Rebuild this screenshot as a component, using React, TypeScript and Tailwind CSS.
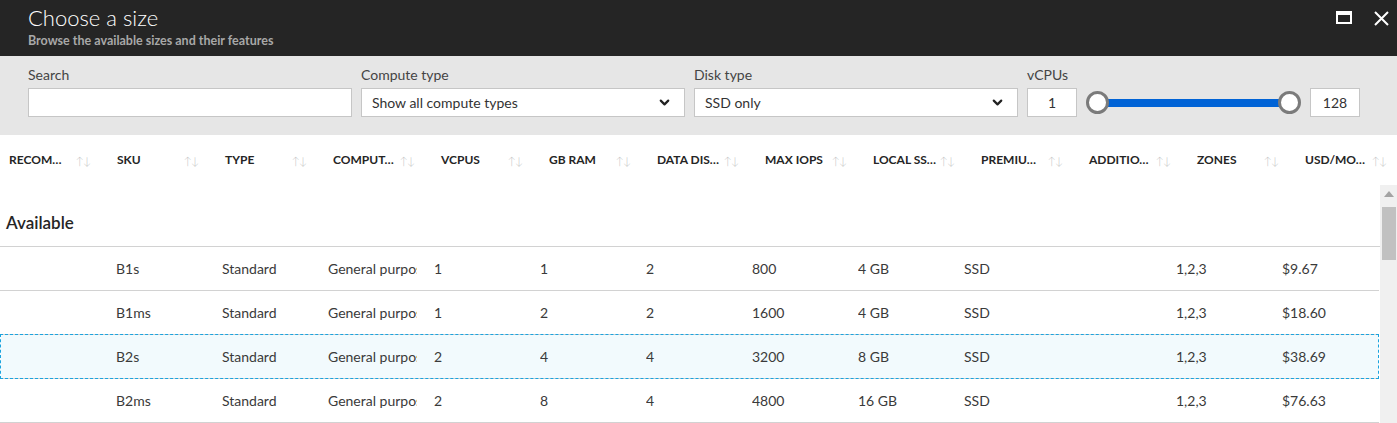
import React from 'react';
import { ChevronDown } from 'lucide-react';

const FONT = { fontFamily: '"Segoe UI", Lato, "Noto Sans", sans-serif' };

const HEADERS = ['RECOM…', 'SKU', 'TYPE', 'COMPUT…', 'VCPUS', 'GB RAM', 'DATA DIS…', 'MAX IOPS', 'LOCAL SS…', 'PREMIU…', 'ADDITIO…', 'ZONES', 'USD/MO…'];

const ROWS = [
  ['', 'B1s', 'Standard', 'General purpose', '1', '1', '2', '800', '4 GB', 'SSD', '', '1,2,3', '$9.67'],
  ['', 'B1ms', 'Standard', 'General purpose', '1', '2', '2', '1600', '4 GB', 'SSD', '', '1,2,3', '$18.60'],
  ['', 'B2s', 'Standard', 'General purpose', '2', '4', '4', '3200', '8 GB', 'SSD', '', '1,2,3', '$38.69'],
  ['', 'B2ms', 'Standard', 'General purpose', '2', '8', '4', '4800', '16 GB', 'SSD', '', '1,2,3', '$76.63'],
];

const SortIcon = () => (
  <span className="text-[11px] leading-none text-[#bcbcbc] tracking-[-1px] font-light">↑↓</span>
);

const Select: React.FC<{ value: string }> = ({ value }) => (
  <div className="w-[324px] h-[29px] bg-white border border-[#c6c6c6] flex items-center justify-between pl-[10px] pr-[12px] text-[14px] text-[#333]">
    <span>{value}</span>
    <ChevronDown size={15} strokeWidth={3.5} className="text-[#222]" />
  </div>
);

export default function App() {
  return (
    <div className="w-[1397px] h-[423px] overflow-hidden bg-white" style={FONT}>
      {/* Title bar */}
      <div className="h-[56px] bg-[#252525] flex justify-between pl-[28px] pr-[8px]">
        <div className="pt-[4px]">
          <div className="text-[22px] font-light text-white leading-[28px]">Choose a size</div>
          <div className="text-[12.5px] font-bold text-[#a8a8a8] leading-[16px] mt-[1px]">Browse the available sizes and their features</div>
        </div>
        <div className="flex items-start gap-[22px] pt-[11px]">
          <div className="w-[16px] h-[13px] border-2 border-t-[4px] border-white" />
          <svg width="15" height="15" viewBox="0 0 15 15">
            <path d="M1 1 L14 14 M14 1 L1 14" stroke="white" strokeWidth="2" />
          </svg>
        </div>
      </div>

      {/* Filters */}
      <div className="h-[79px] bg-[#e6e6e6] pl-[28px] pt-[10px] flex gap-[9px] text-[#444]">
        <div>
          <div className="text-[14px] leading-[18px] mb-[4px]">Search</div>
          <div className="w-[324px] h-[29px] bg-white border border-[#c6c6c6]" />
        </div>
        <div>
          <div className="text-[14px] leading-[18px] mb-[4px]">Compute type</div>
          <Select value="Show all compute types" />
        </div>
        <div>
          <div className="text-[14px] leading-[18px] mb-[4px]">Disk type</div>
          <Select value="SSD only" />
        </div>
        <div>
          <div className="text-[14px] leading-[18px] mb-[4px]">vCPUs</div>
          <div className="flex items-center">
            <div className="w-[50px] h-[29px] bg-white border border-[#c6c6c6] flex items-center justify-center text-[14px] text-[#333]">1</div>
            <div className="relative w-[216px] h-[29px] ml-[8px] mr-[9px] flex items-center px-[12px]">
              <div className="h-[8px] w-full bg-[#0063d6]" />
              <div className="absolute left-[1px] top-[3px] w-[23px] h-[23px] rounded-full bg-white border-[3px] border-[#7b7b7b]" />
              <div className="absolute right-[0px] top-[3px] w-[23px] h-[23px] rounded-full bg-white border-[3px] border-[#7b7b7b]" />
            </div>
            <div className="w-[50px] h-[29px] bg-white border border-[#c6c6c6] flex items-center justify-center text-[14px] text-[#333]">128</div>
          </div>
        </div>
      </div>

      {/* Column headers */}
      <div className="h-[50px] flex items-center">
        {HEADERS.map((h) => (
          <div key={h} className="w-[108px] shrink-0 flex items-center justify-between pl-[9px] pr-[18px]">
            <span className="text-[12px] font-bold text-[#252525] whitespace-nowrap">{h}</span>
            <SortIcon />
          </div>
        ))}
      </div>

      {/* Body */}
      <div className="flex">
        <div className="w-[1380px]">
          <div className="h-[62px] border-b border-[#d2d2d2] flex items-end pl-[6px] pb-[11px]">
            <span className="text-[17px] font-semibold text-[#252525]">Available</span>
          </div>
          {ROWS.map((row, i) => {
            const selected = i === 2;
            return (
              <div
                key={row[1]}
                className={`relative h-[44px] border-b border-[#d2d2d2] flex items-center w-[1379px] ${selected ? 'bg-[#f2fafd]' : ''}`}
              >
                {selected && (
                  <div className="absolute -top-px left-0 right-0 -bottom-px border border-dashed border-[#1ba3de]" />
                )}
                {row.map((cell, j) => (
                  <div key={j} className="w-[106px] shrink-0 pl-[10px]">
                    <div className="w-[89px] overflow-hidden whitespace-nowrap text-[14px] text-[#3a3a3a]">{cell}</div>
                  </div>
                ))}
              </div>
            );
          })}
        </div>
        {/* Scrollbar */}
        <div className="w-[17px] bg-[#f0f0f0] h-[240px] flex flex-col items-center pt-[6px]">
          <div className="w-0 h-0 border-l-[5px] border-r-[5px] border-b-[6px] border-l-transparent border-r-transparent border-b-[#a3a3a3]" />
          <div className="w-[14px] h-[53px] bg-[#c1c1c1] mt-[10px]" />
        </div>
      </div>
    </div>
  );
}
